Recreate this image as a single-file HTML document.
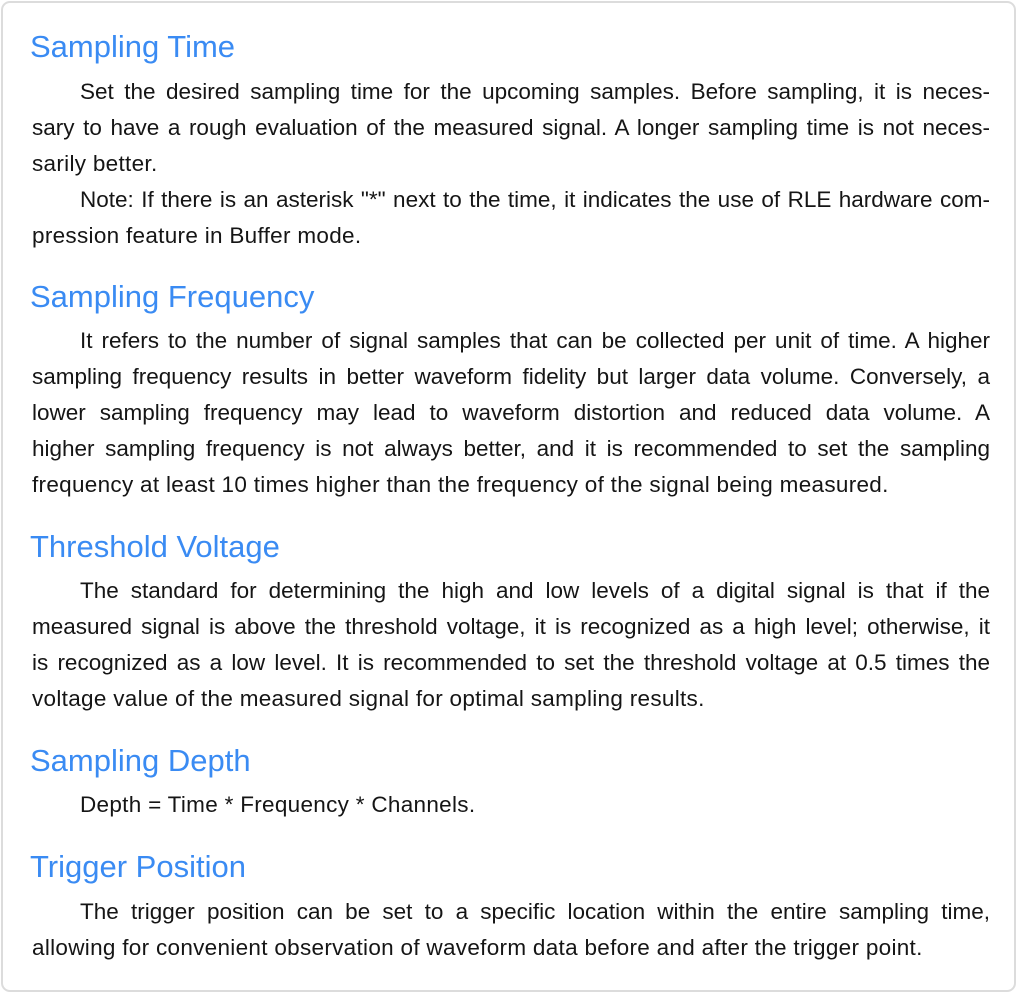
<!DOCTYPE html>
<html><head><meta charset="utf-8"><style>
html,body{margin:0;padding:0;background:#fff;}
body{width:1020px;height:996px;position:relative;overflow:hidden;font-family:"Liberation Sans",sans-serif;}
.card{position:absolute;left:1px;top:1px;width:1015px;height:991px;border:2px solid #dcdcdc;border-radius:9px;box-sizing:border-box;}
.h{position:absolute;left:30px;height:36px;line-height:36px;font-size:31px;color:#3a8bf3;white-space:nowrap;}
.l{position:absolute;left:32px;width:958px;height:36px;line-height:36px;font-size:22.5px;color:#151515;white-space:nowrap;text-align:justify;text-align-last:justify;}
.l.i{left:80px;width:910px;}
.l.e{text-align-last:left;letter-spacing:0.3px;}
</style></head><body>
<div class="card"></div>
<div class="h" style="top:29px">Sampling Time</div>
<div class="l i" style="top:74px">Set the desired sampling time for the upcoming samples. Before sampling, it is neces-</div>
<div class="l" style="top:110px">sary to have a rough evaluation of the measured signal. A longer sampling time is not neces-</div>
<div class="l e" style="top:146px">sarily better.</div>
<div class="l i" style="top:182px">Note: If there is an asterisk "*" next to the time, it indicates the use of RLE hardware com-</div>
<div class="l e" style="top:218px">pression feature in Buffer mode.</div>

<div class="h" style="top:279px">Sampling Frequency</div>
<div class="l i" style="top:323px">It refers to the number of signal samples that can be collected per unit of time. A higher</div>
<div class="l" style="top:359px">sampling frequency results in better waveform fidelity but larger data volume. Conversely, a</div>
<div class="l" style="top:395px">lower sampling frequency may lead to waveform distortion and reduced data volume. A</div>
<div class="l" style="top:431px">higher sampling frequency is not always better, and it is recommended to set the sampling</div>
<div class="l e" style="top:467px">frequency at least 10 times higher than the frequency of the signal being measured.</div>

<div class="h" style="top:529px">Threshold Voltage</div>
<div class="l i" style="top:573px">The standard for determining the high and low levels of a digital signal is that if the</div>
<div class="l" style="top:609px">measured signal is above the threshold voltage, it is recognized as a high level; otherwise, it</div>
<div class="l" style="top:645px">is recognized as a low level. It is recommended to set the threshold voltage at 0.5 times the</div>
<div class="l e" style="top:681px">voltage value of the measured signal for optimal sampling results.</div>

<div class="h" style="top:743px">Sampling Depth</div>
<div class="l i e" style="top:787px">Depth = Time * Frequency * Channels.</div>

<div class="h" style="top:849px">Trigger Position</div>
<div class="l i" style="top:894px">The trigger position can be set to a specific location within the entire sampling time,</div>
<div class="l e" style="top:930px">allowing for convenient observation of waveform data before and after the trigger point.</div>
</body></html>
